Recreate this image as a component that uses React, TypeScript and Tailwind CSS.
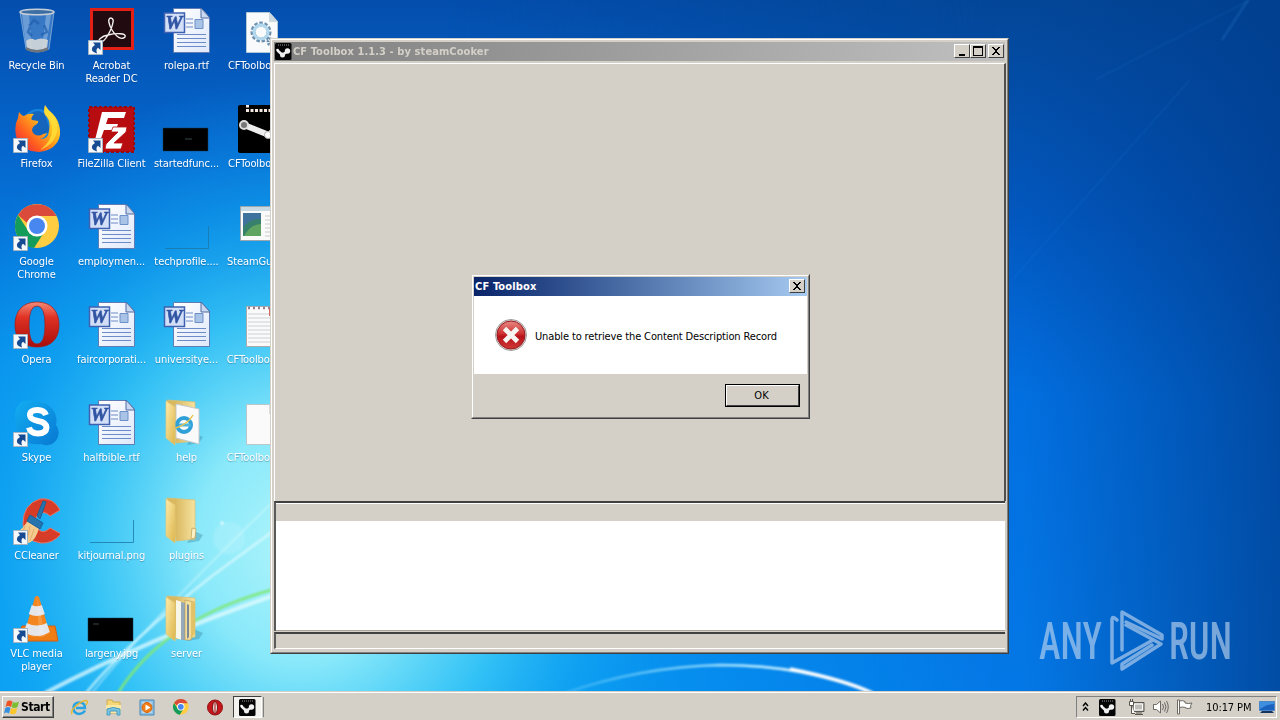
import type { ReactNode } from "react";
import { clsx } from "clsx";

const UI_FONT = "font-['DejaVu_Sans_Condensed','DejaVu_Sans',sans-serif] [font-stretch:condensed]";

type DesktopItem = {
  label: string[];
  icon: ReactNode;
  shortcut?: boolean;
};

const ITEMS: DesktopItem[] = [
  { label: ["Recycle Bin"], icon: <RecycleIcon /> },
  { label: ["Firefox"], icon: <FirefoxIcon />, shortcut: true },
  { label: ["Google", "Chrome"], icon: <ChromeIcon />, shortcut: true },
  { label: ["Opera"], icon: <OperaIcon />, shortcut: true },
  { label: ["Skype"], icon: <SkypeIcon />, shortcut: true },
  { label: ["CCleaner"], icon: <CCleanerIcon />, shortcut: true },
  { label: ["VLC media", "player"], icon: <VlcIcon />, shortcut: true },
  { label: ["Acrobat", "Reader DC"], icon: <AcrobatIcon />, shortcut: true },
  { label: ["FileZilla Client"], icon: <FileZillaIcon />, shortcut: true },
  { label: ["employmen..."], icon: <WordIcon /> },
  { label: ["faircorporati..."], icon: <WordIcon /> },
  { label: ["halfbible.rtf"], icon: <WordIcon /> },
  { label: ["kitjournal.png"], icon: <ClearImageIcon /> },
  { label: ["largeny.jpg"], icon: <BlackImageIcon mark="left" /> },
  { label: ["rolepa.rtf"], icon: <WordIcon /> },
  { label: ["startedfunc..."], icon: <BlackImageIcon mark="center" /> },
  { label: ["techprofile...."], icon: <ClearImageIcon /> },
  { label: ["universitye..."], icon: <WordIcon /> },
  { label: ["help"], icon: <FolderIcon kind="help" /> },
  { label: ["plugins"], icon: <FolderIcon kind="plain" /> },
  { label: ["server"], icon: <FolderIcon kind="files" /> },
  { label: ["CFToolbox.d..."], icon: <GearFileIcon /> },
  { label: ["CFToolbox.e..."], icon: <SteamBigIcon /> },
  { label: ["SteamGuiEx..."], icon: <AppWindowIcon /> },
  { label: ["CFToolbox.in..."], icon: <NotepadIcon /> },
  { label: ["CFToolbox.lo..."], icon: <BlankFileIcon /> },
];

export default function App() {
  return (
    <div className={clsx("relative flex h-[720px] w-[1280px] flex-col overflow-hidden text-[11px] leading-[13px]", UI_FONT)}>
      <Wallpaper />
      <main className="relative min-h-0 flex-1">
        <DesktopIcons />
        <Watermark />
        <MainWindow />
        <ErrorDialog />
      </main>
      <Taskbar />
    </div>
  );
}

function DesktopIcons() {
  return (
    <div className="-ml-[2px] grid w-[300px] grid-flow-col grid-cols-[repeat(4,75px)] grid-rows-[repeat(7,98px)] pt-[7px]">
      {ITEMS.map((item, i) => (
        <div key={i} className="flex flex-col items-center">
          <div className="relative size-12">
            {item.icon}
            {item.shortcut && <ShortcutArrow />}
          </div>
          <div className="ml-[2px] mt-[4px] flex flex-col items-center whitespace-nowrap tracking-[-0.08px] text-white [text-shadow:0_1px_1px_rgba(0,40,90,0.35)]">
            {item.label.map((line) => (
              <span key={line}>{line}</span>
            ))}
          </div>
        </div>
      ))}
    </div>
  );
}

function MainWindow() {
  return (
    <section className="absolute left-[270px] top-[38px] flex h-[616px] w-[739px] flex-col border border-b-[#404040] border-l-[#d4d0c8] border-r-[#404040] border-t-[#d4d0c8] bg-[#d4d0c8]">
      <div className="flex flex-1 flex-col border border-b-[#808080] border-l-white border-r-[#808080] border-t-white px-[2px] pb-[3px] pt-[2px]">
        <header className="flex h-[19px] items-center bg-linear-to-r from-[#808080] to-[#c0c0c0] pl-px pr-px">
          <SteamIcon />
          <h1 className="ml-px flex-1 text-[11px] font-bold tracking-[0.09px] text-[#d4d0c8]">CF Toolbox 1.1.3 - by steamCooker</h1>
          <TitleButton kind="min" />
          <TitleButton kind="max" />
          <span className="w-[2px]" />
          <TitleButton kind="close" />
        </header>
        <div className="-mr-px mt-[2px] h-[438px] border-l border-t border-l-white border-r-2 border-t-white border-r-[#505050]" />
        <div className="h-[130px] border-l-2 border-t-2 border-[#404040] border-l-[#5a5a5a]">
          <div className="h-px bg-white" />
          <div className="h-[17px] bg-[#d4d0c8]" />
          <div className="h-[109px] bg-white" />
          <div className="h-px bg-[#a8a49c]" />
        </div>
        <div className="mt-px flex-1 border-b border-l-2 border-t-2 border-b-white border-l-[#5a5a5a] border-t-[#404040]" />
      </div>
    </section>
  );
}

function ErrorDialog() {
  return (
    <section className="absolute left-[471px] top-[274px] flex h-[145px] w-[339px] flex-col border border-b-[#404040] border-l-[#d4d0c8] border-r-[#404040] border-t-[#d4d0c8] bg-[#d4d0c8]">
      <div className="flex flex-1 flex-col border border-b-[#808080] border-l-white border-r-[#808080] border-t-white px-px pt-px">
        <header className="flex h-[19px] items-center bg-linear-to-r from-[#0a246a] to-[#a6caf0] pl-px pr-[2px]">
          <h2 className="flex-1 text-[11px] font-bold tracking-[0.15px] text-white">CF Toolbox</h2>
          <TitleButton kind="close" />
        </header>
        <div className="flex h-[78px] items-center bg-white pl-[21px]">
          <ErrorIcon />
          <p className="ml-[8px] mt-[3px] whitespace-nowrap tracking-[-0.13px] text-black">Unable to retrieve the Content Description Record</p>
        </div>
        <div className="flex justify-end pr-[7px] pt-[10px]">
          <button className="h-[23px] w-[75px] border border-black">
            <span className="flex h-full items-center justify-center border border-b-[#404040] border-l-white border-r-[#404040] border-t-white pr-[2px] text-black">OK</span>
          </button>
        </div>
      </div>
    </section>
  );
}

function TitleButton({ kind }: { kind: "min" | "max" | "close" }) {
  return (
    <button className="mb-px h-[14px] w-4 border border-b-[#404040] border-l-white border-r-[#404040] border-t-white bg-[#d4d0c8]">
      <svg width="14" height="12" viewBox="0 0 14 12" shapeRendering="crispEdges">
        {kind === "min" && <path d="M4 9h6v2H4z" />}
        {kind === "max" && <path d="M2 1h10v10H2zM3 3v7h8V3z" fillRule="evenodd" />}
        {kind === "close" && <path d="M3 2h2v1h1v1h2V3h1V2h2v1h-1v1H9v1H8v2h1v1h1v1h1v1H9V9H8V8H6v1H5v1H3V9h1V8h1V7h1V5H5V4H4V3H3z" />}
      </svg>
    </button>
  );
}

function Taskbar() {
  return (
    <footer className="relative flex h-[29px] items-center border-t border-[#d4d0c8] bg-[#d4d0c8] pl-[2px] pr-[3px] pt-[2px] shadow-[inset_0_1px_0_#fff]">
      <button className="flex h-[22px] w-[52px] items-center gap-[2px] border border-b-[#404040] border-l-white border-r-[#404040] border-t-white pl-px shadow-[inset_-1px_-1px_0_#808080]">
        <WindowsFlag />
        <span className="text-[12px] font-bold tracking-[-0.4px] text-black">Start</span>
      </button>
      <nav className="ml-[17px] flex items-center gap-[17px]">
        <IeIcon />
        <ExplorerIcon />
        <MediaIcon />
        <span className="size-[17px]"><ChromeIcon small /></span>
        <span className="size-[17px]"><OperaSmallIcon /></span>
      </nav>
      <div className="ml-[9px] flex h-[22px] w-[29px] items-center border border-b-white border-l-[#404040] border-r-white border-t-[#404040] bg-[#f4f2ef] pl-[5px]">
        <SteamIcon />
      </div>
      <span className="ml-px h-[20px] w-px bg-[#808080]" />
      <div className="ml-auto flex h-[22px] w-[201px] items-center border border-b-white border-l-[#808080] border-r-white border-t-[#808080]">
        <svg className="ml-[5px]" width="7" height="10" viewBox="0 0 7 10" fill="none" stroke="#000" strokeWidth="1.4">
          <path d="M1 4l2.500-3L6 4M1 8.500l2.500-3L6 8.500" />
        </svg>
        <span className="ml-[10px]"><SteamIcon /></span>
        <svg className="ml-[12px]" width="17" height="17" viewBox="0 0 17 17">
          <path d="M5 3.500h11v9H5z" fill="#bfbdb7" stroke="#58564f" />
          <path d="M6.500 5h8v6h-8z" fill="none" stroke="#fff" />
          <path d="M7 15.500h8M8 14h6" stroke="#58564f" />
          <path d="M1.500 2.500h4v4h-4zM2.500 0v2M4.500 0v2M3.500 7v7.500H7" fill="#fff" stroke="#58564f" />
        </svg>
        <svg className="ml-[8px]" width="16" height="16" viewBox="0 0 16 16" fill="none" stroke="#6b6962">
          <path d="M.5 5.500h3L7.500 2v12l-4-3.500h-3z" fill="#fff" />
          <path d="M9.500 5q2 3 0 6M11.500 3.500q3 4.500 0 9M13.500 2q3.500 6 0 12" />
        </svg>
        <svg className="ml-[8px]" width="16" height="16" viewBox="0 0 16 16" fill="#fff" stroke="#6b6962">
          <path d="M.5 1h2v14h-2zM2.500 2q3-1 5.500.5V4q3 1 7 0-2.500 3-1 5-3 1-5.500 0V8.500q-3-1-6 0z" />
        </svg>
        <time className="ml-[13px] whitespace-nowrap tracking-[-0.1px] text-black">10:17 PM</time>
        <svg className="ml-auto mr-px" width="16" height="14" viewBox="0 0 16 14">
          <path d="M.5 1.500h15v9H.5z" fill="#1b62bf" stroke="#4b86c8" />
          <path d="M1 2h14v2Q8 4 1 9z" fill="#3f8fe0" />
          <path d="M3 11h10l2 2H1z" fill="#17345f" />
        </svg>
      </div>
    </footer>
  );
}

function Wallpaper() {
  return (
    <svg className="absolute inset-0" width="1280" height="720" viewBox="0 0 1280 720">
      <defs>
        <linearGradient id="sky" x1="0" y1="0" x2="0" y2="1">
          <stop offset="0" stopColor="#044ead" />
          <stop offset="0.22" stopColor="#0568cf" />
          <stop offset="0.5" stopColor="#058fec" />
          <stop offset="0.97" stopColor="#08a0f6" />
        </linearGradient>
        <radialGradient id="glow" gradientUnits="userSpaceOnUse" cx="0" cy="0" r="1" gradientTransform="translate(300 545) scale(420 470)">
          <stop offset="0" stopColor="#b0f5fb" />
          <stop offset="0.25" stopColor="#8debfa" stopOpacity="0.97" />
          <stop offset="0.5" stopColor="#3cc9f6" stopOpacity="0.85" />
          <stop offset="0.72" stopColor="#14a8f2" stopOpacity="0.55" />
          <stop offset="1" stopColor="#0a90ec" stopOpacity="0" />
        </radialGradient>
        <linearGradient id="right" x1="0" y1="0" x2="0" y2="1">
          <stop offset="0" stopColor="#034697" />
          <stop offset="0.3" stopColor="#0257be" />
          <stop offset="0.55" stopColor="#026fe0" />
          <stop offset="0.97" stopColor="#0478e6" />
        </linearGradient>
        <linearGradient id="fade" x1="0" y1="0" x2="1" y2="0">
          <stop offset="0.35" stopColor="#fff" stopOpacity="0" />
          <stop offset="0.78" stopColor="#fff" />
        </linearGradient>
        <mask id="rightMask">
          <rect width="1280" height="720" fill="url(#fade)" />
        </mask>
        <linearGradient id="edge" x1="0" y1="0" x2="1" y2="0">
          <stop offset="0.8" stopColor="#003c8c" stopOpacity="0" />
          <stop offset="1" stopColor="#003c8c" stopOpacity="0.72" />
        </linearGradient>
        <linearGradient id="arc" x1="0" y1="0" x2="1" y2="0">
          <stop offset="0" stopColor="#7fd8fa" stopOpacity="0.3" />
          <stop offset="0.6" stopColor="#b8ecff" />
          <stop offset="1" stopColor="#fff" />
        </linearGradient>
        <filter id="soft" x="-20%" y="-20%" width="140%" height="140%">
          <feGaussianBlur stdDeviation="0.9" />
        </filter>
      </defs>
      <rect width="1280" height="720" fill="url(#sky)" />
      <rect width="1280" height="720" fill="url(#right)" mask="url(#rightMask)" />
      <rect width="1280" height="720" fill="url(#glow)" />
      <rect width="1280" height="720" fill="url(#edge)" />
      <g filter="url(#soft)" fill="none">
        <path d="M45 693Q150 638 275 595" stroke="#e4fcff" strokeWidth="4" opacity="0.75" />
        <path d="M86 693Q130 640 212 576L280 526" stroke="#dcfbff" strokeWidth="2.500" opacity="0.75" />
        <path d="M92 693Q150 620 280 495" stroke="#dcfbff" strokeWidth="1.500" opacity="0.6" />
        <path d="M118 693Q165 618 275 589" stroke="#80e878" strokeWidth="2.500" />
        <circle cx="222" cy="523" r="1.500" fill="#fff" />
        <circle cx="229" cy="538" r="16" fill="#d8fbff" opacity="0.2" />
        <path d="M565 693Q640 667 720 665Q805 665 873 693" stroke="url(#arc)" strokeWidth="2.500" />
        <path d="M790 669Q845 680 872 693" stroke="#fff" strokeWidth="3.500" />
        <path d="M1012 280L1190 80M1095 80L1250 0" stroke="#3b8fe0" strokeWidth="2" opacity="0.1" />
        <path d="M1222 40L1248 0" stroke="#3b8fe0" strokeWidth="2" opacity="0.3" />
      </g>
    </svg>
  );
}

function Watermark() {
  return (
    <svg className="absolute left-[1030px] top-[596px]" width="250" height="84" viewBox="1030 596 250 84" opacity="0.62">
      <g fill="#c3d9f1" fontFamily="Roboto, sans-serif" fontSize="51" fontWeight="500">
        <text x="1039" y="659" textLength="63" lengthAdjust="spacingAndGlyphs">ANY</text>
        <text x="1169" y="659" textLength="63" lengthAdjust="spacingAndGlyphs">RUN</text>
      </g>
      <g fill="none" stroke="#c3d9f1" strokeWidth="3.500" strokeLinejoin="round" strokeLinecap="round">
        <path d="M1117 620Q1112 615 1112 620V663L1153 640" />
        <path d="M1122 650V612L1162 635V639L1126 622" />
        <path d="M1126 625L1161 644L1122 669V664L1152 645" />
      </g>
    </svg>
  );
}

function ShortcutArrow() {
  return (
    <svg className="absolute bottom-0 left-px" width="15" height="15" viewBox="0 0 15 15">
      <path d="M.5.5h14v14H.5z" fill="#f6f9fc" stroke="#a5b4c3" />
      <path d="M5 2.500h7.500V10L10 7.800Q7.500 9.500 9 13.500 2 11.500 4.500 7L7 5z" fill="#174b91" />
    </svg>
  );
}

function RecycleIcon() {
  return (
    <svg width="48" height="48" viewBox="0 0 48 48">
      <path d="M8 5h34l-5 37q-12 6-23 0z" fill="#8fb9e2" fillOpacity="0.38" stroke="#8fb3d9" strokeWidth="0.8" />
      <path d="M10 7h7l3 35-6-2zM34 8h5l-5 31-4 3z" fill="#e1f2ff" opacity="0.3" />
      <path d="M14 34q5-4 9-1 6-3 13 0l-1 8q-11 5-20 0z" fill="#d5d8d8" opacity="0.9" />
      <path d="M14 40q11 6 22 0v3q-11 5-22 0z" fill="#6e747c" />
      <ellipse cx="25" cy="5" rx="17" ry="2.800" fill="#3d6ea3" stroke="#c5ced8" strokeWidth="1.500" />
      <path d="M17 19l5-6 5 4M32 18l3 7-6 3M20 29l-4-4 2-5" fill="none" stroke="#1f5fae" strokeWidth="2.500" opacity="0.7" />
    </svg>
  );
}

function FirefoxIcon() {
  return (
    <svg width="48" height="48" viewBox="0 0 48 48">
      <defs>
        <linearGradient id="ffTail" x1="1" y1="0" x2="0" y2="1">
          <stop offset="0" stopColor="#fff24a" />
          <stop offset="0.4" stopColor="#ffb51b" />
          <stop offset="0.7" stopColor="#ff5b20" />
          <stop offset="1" stopColor="#e5194e" />
        </linearGradient>
      </defs>
      <circle cx="26" cy="20" r="16" fill="#1685df" />
      <path d="M18 9q8-6 15 0l5 17-12 9-9-9z" fill="#165bb2" opacity="0.75" />
      <path d="M33 0q3 5 7 8 9 9 8 22-3 15-21 17Q8 46 4 31 2 20 6 13l1-6q3 4 5 4 4-3 10-2-4 4-2 6l6 1q1 2-4 5-4 4 0 8 5 3 9 0l4-1q-2 5-7 6 8 1 9-8Q39 15 33 10q-2-4 0-10z" fill="url(#ffTail)" />
      <path d="M34 3q7 6 10 12 4 11-3 21-5 6-13 9 12-9 12-20 0-9-6-15-2-3 0-7z" fill="#ffe03a" opacity="0.8" />
    </svg>
  );
}

function ChromeIcon({ small }: { small?: boolean }) {
  const size = small ? 16 : 48;
  return (
    <svg width={size} height={size} viewBox={small ? "3 1 45 45" : "0 0 48 48"}>
      <circle cx="25" cy="23" r="22" fill="#ffcd42" />
      <path d="M6 12A22 22 0 0 1 44.500 13H25a11 11 0 0 0-10 7z" fill="#db4b3c" />
      <path d="M6 12A22 22 0 0 0 22 45l9-14q-5 4-11 1-3-2-5-6z" fill="#149c5a" />
      <circle cx="25" cy="23" r="10.500" fill="#fff" />
      <circle cx="25" cy="23" r="8" fill="#4787ef" />
    </svg>
  );
}

function OperaIcon() {
  return (
    <svg width="48" height="48" viewBox="0 0 48 48">
      <defs>
        <linearGradient id="opera" x1="0" y1="0" x2="0" y2="1">
          <stop offset="0" stopColor="#f28c78" />
          <stop offset="0.35" stopColor="#df3023" />
          <stop offset="1" stopColor="#a70e0b" />
        </linearGradient>
      </defs>
      <path d="M25 1C10 1 3 11 3 24s7 22 22 22 22-9 22-22S40 1 25 1zm0 4q8 0 8 19t-8 19-8-19 8-19z" fill="url(#opera)" stroke="#a61914" strokeWidth="0.7" />
    </svg>
  );
}

function OperaSmallIcon() {
  return (
    <svg width="17" height="17" viewBox="0 0 17 17">
      <circle cx="8" cy="8.500" r="7.500" fill="#c6151b" stroke="#8f1114" />
      <ellipse cx="8" cy="8.500" rx="2.500" ry="5.800" fill="#e7dad5" stroke="#741013" />
      <path d="M7.500 4h1v9h-1z" fill="#b01519" />
    </svg>
  );
}

function SkypeIcon() {
  return (
    <svg width="48" height="48" viewBox="0 0 48 48">
      <defs>
        <linearGradient id="skype" x1="0" y1="0" x2="1" y2="1">
          <stop offset="0" stopColor="#12aef2" />
          <stop offset="1" stopColor="#0878d2" />
        </linearGradient>
      </defs>
      <path d="M12 2q7-2 13 1 14 0 19 14 1 5 0 9 5 6 1 14-6 9-16 5-15 2-22-9-4-6-3-14Q1 15 5 8q3-5 7-6z" fill="url(#skype)" />
      <path d="M34 16Q32 11 25.500 11q-8 0-7.500 5.500.5 4 8 5.500 8.500 1.500 8.500 6.500-.5 6-8.500 6-7.500 0-9-6" fill="none" stroke="#fff" strokeWidth="6" />
    </svg>
  );
}

function CCleanerIcon() {
  return (
    <svg width="48" height="48" viewBox="0 0 48 48">
      <path d="M48 13L38 19q-6-7-13 0-6 8 2 14 5 4 11-2l11 6q-9 10-20 9Q12 44 11 27 11 7 28 2q13-2 20 11z" fill="#d63c27" stroke="#eb7360" />
      <path d="M17 21q8 1 10 10-3 12-10 15Q7 44 2 37q10-5 15-16z" fill="#f5cb8d" />
      <path d="M13 29l-4 11M18 29l-3 15M22 32l-4 12" stroke="#e0ae70" />
      <path d="M18 18l13 8-3 6-13-8zM25 19L31 4l3 1-6 17z" fill="#2674ad" stroke="#1d6098" />
    </svg>
  );
}

function VlcIcon() {
  return (
    <svg width="48" height="48" viewBox="0 0 48 48">
      <path d="M10 31h33l3 15H6z" fill="#ef7d16" stroke="#d85e09" />
      <path d="M23 2q2-2 4 0l11 37q-13 7-26 0z" fill="#f48620" />
      <path d="M19.800 10q5 2.500 10 0l3 9q-8 4-16 0zM14.800 28q10 5 20 0l3 9q-13 8-26 0z" fill="#e4e6ea" />
      <path d="M25 1l8 40-6 1z" fill="#fff" opacity="0.16" />
    </svg>
  );
}

function AcrobatIcon() {
  return (
    <svg width="48" height="48" viewBox="0 0 48 48">
      <path d="M4.500 2.500h41v39h-41z" fill="#210b11" stroke="#e42016" strokeWidth="3" />
      <path d="M24 11c-4 0-2 7 1 12 5 8 10 10 13 7 2-4-9-4-17-2-7 1-11 6-8 7 5 1 12-13 13-20 1-2-1-4-2-4z" fill="none" stroke="#f4f1f1" strokeWidth="1.400" />
    </svg>
  );
}

function FileZillaIcon() {
  return (
    <svg width="48" height="48" viewBox="0 0 48 48">
      <path d="M2 2h45v45H2z" fill="#b80d10" stroke="#970b10" strokeWidth="2" strokeDasharray="3 2" />
      <path d="M15 7h24l-2 6H21l-2 6h12l-2 6H17l-5 14H7z" fill="#fff" />
      <path d="M26 22h14l-1 5-12 11h9l-2 6H18l1-5 12-12h-7z" fill="#fff" stroke="#b80d10" strokeWidth="0.8" />
    </svg>
  );
}

function WordIcon() {
  return (
    <svg width="48" height="48" viewBox="0 0 48 48">
      <defs>
        <linearGradient id="page" x1="0" y1="0" x2="1" y2="1">
          <stop offset="0" stopColor="#fff" />
          <stop offset="1" stopColor="#dfe8fa" />
        </linearGradient>
      </defs>
      <path d="M11.500 1.500h28l8 9v35h-36z" fill="url(#page)" stroke="#5f7cb5" />
      <path d="M39 1v10h9z" fill="#cad8ef" stroke="#4f6ba3" />
      <path d="M24 12h7M24 16h7M24 20h7M15 27.500h29M15 31.500h29M15 35.500h29M15 39.500h29" stroke="#6c8bc7" />
      <path d="M33 12.500h8v9h-8z" fill="#a9c3e7" stroke="#6e90c8" />
      <path d="M2.500 6h20v19.500h-20z" fill="#d3dff7" stroke="#3e61b1" strokeWidth="1.500" />
      <text x="3.500" y="22" fill="#3155a4" stroke="#3155a4" strokeWidth="0.6" fontFamily="Liberation Serif, serif" fontSize="18" fontWeight="700" fontStyle="italic" textLength="17" lengthAdjust="spacingAndGlyphs">W</text>
    </svg>
  );
}

function BlackImageIcon({ mark }: { mark: "left" | "center" }) {
  return (
    <svg width="48" height="48" viewBox="0 0 48 48">
      <path d="M1 23h45v23H1z" fill="#000" stroke="#143d56" strokeWidth="0.5" />
      <path d={mark === "left" ? "M6 29h6" : "M23 34h7"} stroke="#52646a" strokeWidth="0.7" />
    </svg>
  );
}

function ClearImageIcon() {
  return (
    <svg width="48" height="48" viewBox="0 0 48 48">
      <path d="M3 45.500h43.500V23" fill="none" stroke="#1b78a8" strokeOpacity="0.8" />
    </svg>
  );
}

function FolderIcon({ kind }: { kind: "help" | "plain" | "files" }) {
  return (
    <svg width="48" height="48" viewBox="0 0 48 48">
      <defs>
        <linearGradient id="folder" x1="0" y1="0" x2="1" y2="1">
          <stop offset="0" stopColor="#ffebaa" />
          <stop offset="1" stopColor="#dcb54a" />
        </linearGradient>
        <linearGradient id="folderBack" x1="0" y1="0" x2="1" y2="0">
          <stop offset="0.3" stopColor="#d9b85f" />
          <stop offset="1" stopColor="#f7e3a0" />
        </linearGradient>
      </defs>
      <path d="M32 34l9 4-4 6-12 2z" fill="#347c94" opacity="0.35" />
      <path d="M5 1l28 2v39L14 44z" fill="url(#folderBack)" stroke="#dcbf70" strokeWidth="0.7" />
      {kind === "help" && (
        <>
          <path d="M14 5l23 5v35l-23-6z" fill="#fafafa" stroke="#c5c9ca" />
          <circle cx="22" cy="26" r="7" fill="none" stroke="#30a0d8" strokeWidth="4" />
          <path d="M17 26h12" stroke="#4bb7df" strokeWidth="3" />
          <path d="M14 29Q26 25 31 16" fill="none" stroke="#e9c44a" strokeWidth="1.500" />
        </>
      )}
      {kind === "files" && (
        <>
          <path d="M14 5l6 2v38l-6-2z" fill="#f8f6e7" />
          <path d="M19 7l4 1v37h-4z" fill="#95a9b9" />
          <path d="M23 5l9 2-3 38h-6z" fill="#f1df9d" stroke="#ba9650" strokeWidth="0.6" />
          <path d="M25 9l2 1v32l-2 2z" fill="#7d8894" />
          <path d="M29 7l4 1v30l-4 6z" fill="#e1c266" />
        </>
      )}
      <path d="M4 2l9 6v38L4 39z" fill="url(#folder)" stroke="#e2c777" strokeWidth="0.7" />
      {kind === "plain" && <path d="M30 31l4 1-1 9-4 1z" fill="#faf1c9" stroke="#bf9a49" strokeWidth="0.7" />}
    </svg>
  );
}

function GearFileIcon() {
  return (
    <svg width="48" height="48" viewBox="0 0 48 48">
      <path d="M9.500 5.500h23l8 9v31h-31z" fill="#f8fafb" stroke="#b4c9d6" />
      <path d="M32 5v10h9z" fill="#ccd9df" />
      <circle cx="24" cy="25" r="8" fill="none" stroke="#6d8fae" strokeWidth="5" strokeDasharray="3 1.500" />
      <circle cx="24" cy="25" r="7" fill="none" stroke="#b2d8ed" strokeWidth="3" />
      <circle cx="34" cy="35" r="3" fill="none" stroke="#6d8fae" strokeWidth="3" strokeDasharray="2 1" />
    </svg>
  );
}

function SteamBigIcon() {
  return (
    <svg width="48" height="48" viewBox="0 0 48 48">
      <rect x="1" width="47" height="48" rx="2" fill="#000" />
      <path d="M9 1h3M9 5.500h39" stroke="#f4e8df" strokeWidth="3" strokeDasharray="3 1.500" />
      <path d="M7 20l25 10 9-9" fill="none" stroke="#eee" strokeWidth="6" />
      <circle cx="7" cy="20" r="4" fill="#777" stroke="#ddd" strokeWidth="2" />
      <circle cx="31" cy="30" r="3.500" fill="#fff" stroke="#aaa" />
    </svg>
  );
}

function AppWindowIcon() {
  return (
    <svg width="48" height="48" viewBox="0 0 48 48">
      <path d="M3.500 3.500h44v34h-44z" fill="#fafafa" stroke="#9ba7ad" />
      <path d="M4 4h43v4H4z" fill="#c7d9e2" />
      <path d="M6 10h18v23H6z" fill="#37806c" />
      <path d="M6 10h18v6Q14 15 6 24z" fill="#3f729c" />
      <path d="M7 33Q14 21 24 21v12z" fill="#60a461" />
      <path d="M28 13h16M28 17h16M28 21h16M28 25h16M28 29h16M28 33h16" stroke="#c8caca" />
    </svg>
  );
}

function NotepadIcon() {
  return (
    <svg width="48" height="48" viewBox="0 0 48 48">
      <path d="M9.500 5.500h30v40h-30z" fill="#fafafa" stroke="#aaa" />
      <path d="M11 13h27M11 17h27M11 21h27M11 25h27M11 29h27M11 33h27M11 37h27M11 41h27" stroke="#ccd2d7" />
      <path d="M11 7h27" stroke="#967d92" strokeWidth="2.500" strokeDasharray="2 3" />
      <path d="M33 8v7" stroke="#d4665d" strokeWidth="2" />
    </svg>
  );
}

function BlankFileIcon() {
  return (
    <svg width="48" height="48" viewBox="0 0 48 48">
      <path d="M9.500 5.500h23l8 9v31h-31z" fill="#fafafa" stroke="#bac7ca" />
      <path d="M32 5v10h9z" fill="#dadada" />
    </svg>
  );
}

function SteamIcon() {
  return (
    <svg width="17" height="17" viewBox="0 0 17 17">
      <rect width="16.500" height="17" rx="1.500" fill="#050505" />
      <path d="M3 2h11" stroke="#999" strokeDasharray="1 1" />
      <path d="M2.500 7.500l5 4.500 5-4" fill="none" stroke="#eee" strokeWidth="2.500" />
      <circle cx="2.500" cy="7" r="1.300" fill="#fff" />
      <circle cx="12.500" cy="8" r="2.700" fill="#f2f2f2" />
      <circle cx="7.500" cy="12" r="2.500" fill="#eee" />
    </svg>
  );
}

function ErrorIcon() {
  return (
    <svg width="32" height="32" viewBox="0 0 32 32">
      <defs>
        <linearGradient id="error" x1="0" y1="0" x2="0" y2="1">
          <stop offset="0" stopColor="#e88a83" />
          <stop offset="0.45" stopColor="#cd3232" />
          <stop offset="0.55" stopColor="#b71219" />
          <stop offset="1" stopColor="#d03938" />
        </linearGradient>
      </defs>
      <circle cx="16" cy="16" r="15.500" fill="#e4d9d7" stroke="#8d8585" strokeWidth="0.8" />
      <circle cx="16" cy="16" r="14" fill="url(#error)" stroke="#981b21" />
      <path d="M9.500 9.500l13 13M22.500 9.500l-13 13" stroke="#f7f5f2" strokeWidth="4.800" />
    </svg>
  );
}

function WindowsFlag() {
  return (
    <svg width="15" height="16" viewBox="0 0 15 16">
      <path d="M3 2.500q2.500-2 5.500 0L7 8Q4 6 1.500 8z" fill="#ef5324" />
      <path d="M9 3q3 1.500 6-.5L13.500 8q-3 2-6 0z" fill="#7cbd32" />
      <path d="M1.300 9Q4 7 6.500 9L5 14.500q-2.500-2-5 0z" fill="#348fdd" />
      <path d="M7.200 9q3 1.500 6 0l-1.500 5.500q-3 1.500-6 0z" fill="#fbc52c" />
    </svg>
  );
}

function IeIcon() {
  return (
    <svg width="17" height="17" viewBox="0 0 17 17" fill="none">
      <path d="M14 11.500q-2 3.500-6 3.500-5.500-.5-5.500-6t6-5.500q5.500 0 5.500 5.500H5" stroke="#2aa3e0" strokeWidth="2.500" />
      <path d="M1 15Q-1 12 6 6q8-6 10-4 1 1-1 4" stroke="#e5b931" strokeWidth="1.500" />
    </svg>
  );
}

function ExplorerIcon() {
  return (
    <svg width="17" height="17" viewBox="0 0 17 17">
      <path d="M2 1h5l1 2h7v11H2z" fill="#f6d778" stroke="#cfaa48" />
      <path d="M1 6h15v8H1z" fill="#f9e7a2" />
      <path d="M2 10q6-3 13 0v6h-3v-4H5v4H2z" fill="#79c3e4" stroke="#469cc3" />
    </svg>
  );
}

function MediaIcon() {
  return (
    <svg width="17" height="17" viewBox="0 0 17 17">
      <path d="M1 1h14v15H1z" fill="#8fc1e3" stroke="#4889ba" />
      <path d="M3.500 3h9v11h-9z" fill="#c6e1f1" />
      <circle cx="8" cy="8.500" r="5" fill="#f07d15" stroke="#d66310" />
      <path d="M6.500 5.500l5 3-5 3z" fill="#fff" />
    </svg>
  );
}
